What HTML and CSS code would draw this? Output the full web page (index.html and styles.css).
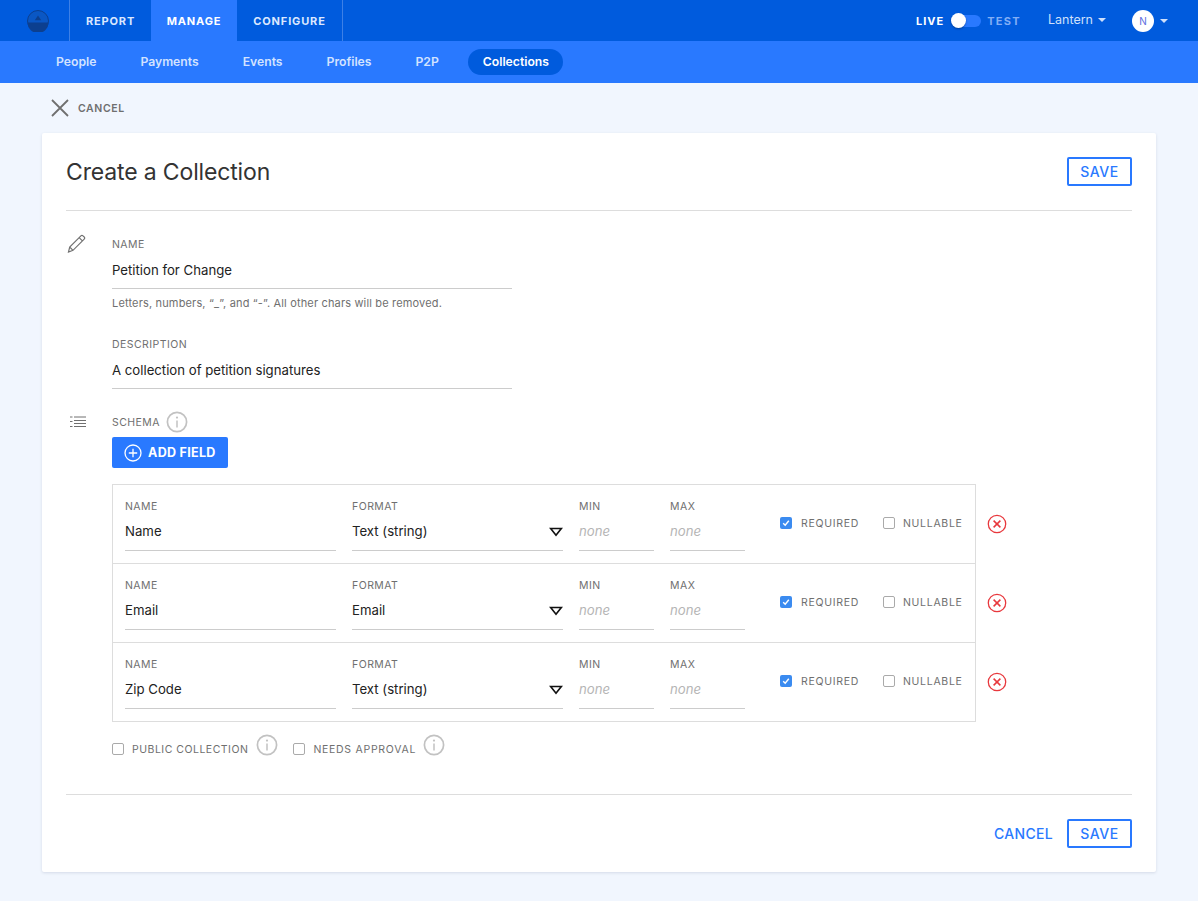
FILE: index.html
```html
<!DOCTYPE html>
<html lang="en">
<head>
<meta charset="utf-8">
<title>Create a Collection</title>
<link rel="stylesheet" href="styles.css">
</head>
<body>
<svg class="sprite" width="0" height="0" aria-hidden="true">
  <symbol id="i-info" viewBox="0 0 22 22">
    <circle cx="11" cy="11" r="9.6" fill="none" stroke="currentColor" stroke-width="1.7"/>
    <circle cx="11" cy="6.6" r="1.1" fill="currentColor"/>
    <path d="M11 9.5v7" fill="none" stroke="currentColor" stroke-width="1.5"/>
  </symbol>
  <symbol id="i-remove" viewBox="0 0 20 20">
    <circle cx="10" cy="10" r="8.7" fill="none" stroke="#e8383d" stroke-width="1.3"/>
    <path d="M6.6 6.6l6.8 6.8M13.4 6.6l-6.8 6.8" fill="none" stroke="#e8383d" stroke-width="1.5"/>
  </symbol>
  <symbol id="i-down" viewBox="0 0 14 10">
    <path d="M1.6 1.5h10.8L7 8.2z" fill="none" stroke="#111" stroke-width="1.7" stroke-linejoin="miter"/>
  </symbol>
  <symbol id="i-check" viewBox="0 0 12 12">
    <path d="M3.2 6.3l2 2 3.6-4.6" fill="none" stroke="#fff" stroke-width="1.4"/>
  </symbol>
</svg>

<header class="topbar">
  <div class="logo-cell">
    <svg class="logo" width="22" height="22" viewBox="0 0 22 22">
      <circle cx="11" cy="11" r="10.5" fill="#0a57c4" stroke="#0c3f8f" stroke-width="1"/>
      <path d="M0.5 12.500h21a10.500 10.500 0 0 1-21 0z" fill="#0c3f8f"/>
      <path d="M11 5.500l3.200 4.700H7.800z" fill="#0c3f8f"/>
    </svg>
  </div>
  <nav class="mainnav">
    <a class="mainnav-item mainnav-report">REPORT</a>
    <a class="mainnav-item mainnav-manage">MANAGE</a>
    <a class="mainnav-item mainnav-configure">CONFIGURE</a>
  </nav>
  <div class="topbar-right">
    <span class="mode mode-live">LIVE</span>
    <span class="toggle"><span class="toggle-knob"></span></span>
    <span class="mode mode-test">TEST</span>
    <span class="org">Lantern<span class="caret"></span></span>
    <span class="user"><span class="avatar">N</span><span class="caret"></span></span>
  </div>
</header>

<nav class="subnav">
  <a class="subnav-item">People</a>
  <a class="subnav-item">Payments</a>
  <a class="subnav-item">Events</a>
  <a class="subnav-item">Profiles</a>
  <a class="subnav-item">P2P</a>
  <a class="subnav-item subnav-active">Collections</a>
</nav>

<main class="page">
  <div class="back">
    <svg width="20" height="20" viewBox="0 0 20 20"><path d="M2 2l16 16M18 2L2 18" fill="none" stroke="#6f6f6f" stroke-width="1.8"/></svg>
    <span>CANCEL</span>
  </div>

  <section class="card">
    <div class="card-head">
      <h1>Create a Collection</h1>
      <button class="btn-outline">SAVE</button>
    </div>

    <div class="section section-details">
      <svg class="section-icon" width="20" height="20" viewBox="0 0 20 20">
        <path d="M1.500 18l1.200-5L13.900 1.800a1.500 1.500 0 0 1 2.100 0l1.200 1.200a1.500 1.500 0 0 1 0 2.100L6 16.300zM2.700 13l3.300 3.300M12.100 3.600l3.300 3.300" fill="none" stroke="#707070" stroke-width="1.150"/>
      </svg>
      <div class="section-body">
        <div class="field field-wide">
          <div class="label">NAME</div>
          <div class="value">Petition for Change</div>
        </div>
        <div class="hint">Letters, numbers, “_”, and “-”. All other chars will be removed.</div>
        <div class="field field-wide">
          <div class="label">DESCRIPTION</div>
          <div class="value">A collection of petition signatures</div>
        </div>
      </div>
    </div>

    <div class="section section-schema">
      <svg class="section-icon" width="16" height="12" viewBox="0 0 16 12">
        <path d="M0 1h2.500M0 5.500h2.500M0 10.500h2.500M4 1h12M4 4.500h12M4 7.500h12M4 10.500h12" fill="none" stroke="#707070" stroke-width="1"/>
      </svg>
      <div class="section-body">
        <div class="schema-head">
          <span class="label">SCHEMA</span>
          <svg class="info" width="22" height="22"><use href="#i-info"/></svg>
        </div>
        <button class="btn-add">
          <svg width="18" height="18" viewBox="0 0 18 18"><circle cx="9" cy="9" r="8" fill="none" stroke="#fff" stroke-width="1.300"/><path d="M9 4.800v8.400M4.800 9h8.400" fill="none" stroke="#fff" stroke-width="1.300"/></svg>
          ADD FIELD
        </button>

        <div class="schema-wrap">
          <div class="schema-table">
            <div class="row">
              <div class="field col-name"><div class="label">NAME</div><div class="value">Name</div></div>
              <div class="field col-format"><div class="label">FORMAT</div><div class="value value-select">Text (string)<svg width="14" height="10"><use href="#i-down"/></svg></div></div>
              <div class="field col-num"><div class="label">MIN</div><div class="value value-empty">none</div></div>
              <div class="field col-num"><div class="label">MAX</div><div class="value value-empty">none</div></div>
              <label class="check check-required"><span class="box box-on"><svg width="12" height="12"><use href="#i-check"/></svg></span>REQUIRED</label>
              <label class="check"><span class="box"></span>NULLABLE</label>
            </div>
            <div class="row">
              <div class="field col-name"><div class="label">NAME</div><div class="value">Email</div></div>
              <div class="field col-format"><div class="label">FORMAT</div><div class="value value-select">Email<svg width="14" height="10"><use href="#i-down"/></svg></div></div>
              <div class="field col-num"><div class="label">MIN</div><div class="value value-empty">none</div></div>
              <div class="field col-num"><div class="label">MAX</div><div class="value value-empty">none</div></div>
              <label class="check check-required"><span class="box box-on"><svg width="12" height="12"><use href="#i-check"/></svg></span>REQUIRED</label>
              <label class="check"><span class="box"></span>NULLABLE</label>
            </div>
            <div class="row">
              <div class="field col-name"><div class="label">NAME</div><div class="value">Zip Code</div></div>
              <div class="field col-format"><div class="label">FORMAT</div><div class="value value-select">Text (string)<svg width="14" height="10"><use href="#i-down"/></svg></div></div>
              <div class="field col-num"><div class="label">MIN</div><div class="value value-empty">none</div></div>
              <div class="field col-num"><div class="label">MAX</div><div class="value value-empty">none</div></div>
              <label class="check check-required"><span class="box box-on"><svg width="12" height="12"><use href="#i-check"/></svg></span>REQUIRED</label>
              <label class="check"><span class="box"></span>NULLABLE</label>
            </div>
          </div>
          <div class="remove-col">
            <svg width="20" height="20"><use href="#i-remove"/></svg>
            <svg width="20" height="20"><use href="#i-remove"/></svg>
            <svg width="20" height="20"><use href="#i-remove"/></svg>
          </div>
        </div>

        <div class="options">
          <label class="check"><span class="box"></span>PUBLIC COLLECTION</label>
          <svg class="info" width="22" height="22"><use href="#i-info"/></svg>
          <label class="check check-approval"><span class="box"></span>NEEDS APPROVAL</label>
          <svg class="info info-approval" width="22" height="22"><use href="#i-info"/></svg>
        </div>
      </div>
    </div>

    <div class="card-foot">
      <a class="link">CANCEL</a>
      <button class="btn-outline">SAVE</button>
    </div>
  </section>
</main>
</body>
</html>
```
FILE: styles.css
```css
* { box-sizing: border-box; }
html, body { margin: 0; }
body {
  height: 901px;
  overflow: hidden;
  background: #f1f6fe;
  font-family: Inter, "Noto Sans", sans-serif;
  font-size: 13px;
  color: #222;
}
.sprite { position: absolute; }

.topbar {
  display: flex;
  height: 41px;
  background: #005bdd;
  color: #fff;
}
.logo-cell {
  width: 70px;
  display: flex;
  align-items: center;
  padding-left: 27px;
  border-right: 1px solid #3d80e6;
}
.mainnav { display: flex; }
.mainnav-item {
  display: flex;
  align-items: center;
  justify-content: center;
  font-size: 11px;
  font-weight: 700;
  letter-spacing: 0.85px;
  color: #dbe8ff;
}
.mainnav-report { width: 81px; }
.mainnav-manage { width: 86px; background: #2979ff; color: #fff; }
.mainnav-configure { width: 106px; border-right: 1px solid #3d80e6; }

.topbar-right {
  margin-left: auto;
  display: flex;
  align-items: center;
  padding-right: 30px;
}
.mode { font-size: 11px; font-weight: 700; letter-spacing: 1.3px; }
.mode-live { letter-spacing: 1px; color: #fff; }
.mode-test { color: #82aef5; }
.toggle {
  display: flex;
  align-items: center;
  width: 30px;
  height: 12px;
  margin: 0 6px 0 7px;
  border-radius: 6px;
  background: #2979ff;
}
.toggle-knob {
  width: 15px;
  height: 15px;
  border-radius: 50%;
  background: #fff;
  box-shadow: 0 1px 2px rgba(0, 0, 0, 0.3);
}
.org {
  display: flex;
  align-items: center;
  gap: 5px;
  margin-left: 27px;
  padding-bottom: 2px;
  font-size: 12.5px;
  color: #cfe0fb;
}
.caret {
  width: 0;
  height: 0;
  border-left: 4px solid transparent;
  border-right: 4px solid transparent;
  border-top: 4px solid #cfe0fb;
}
.user { display: flex; align-items: center; gap: 6px; margin-left: 26px; }
.avatar {
  display: flex;
  align-items: center;
  justify-content: center;
  width: 22px;
  height: 22px;
  border-radius: 50%;
  background: #fff;
  color: #5b6de0;
  font-size: 10px;
}

.subnav {
  display: flex;
  align-items: center;
  gap: 14px;
  height: 42px;
  padding-left: 41px;
  background: #2979ff;
}
.subnav-item {
  padding: 0 15px;
  line-height: 26px;
  border-radius: 13px;
  font-size: 12.2px;
  font-weight: 600;
  color: #d3e3ff;
}
.subnav-active { padding-right: 14px; background: #005bdd; color: #fff; }

.page { padding: 0 42px; }
.back {
  display: flex;
  align-items: center;
  gap: 8px;
  height: 50px;
  padding-left: 8px;
  font-size: 10.500px;
  font-weight: 600;
  letter-spacing: 0.6px;
  color: #6f6f6f;
}
.card {
  height: 739px;
  padding: 0 24px;
  background: #fff;
  border-radius: 2px;
  box-shadow: 0 1px 3px rgba(40, 60, 100, 0.14);
}
.card-head {
  display: flex;
  align-items: center;
  justify-content: space-between;
  height: 78px;
  border-bottom: 1px solid #ddd;
}
h1 {
  margin: 0;
  font-size: 23px;
  font-weight: 400;
  letter-spacing: -0.15px;
  color: #333;
}
.btn-outline {
  width: 65px;
  height: 29px;
  padding: 0;
  border: 2px solid #2979ff;
  border-radius: 2px;
  background: #fff;
  font: 500 14px Inter, sans-serif;
  letter-spacing: 0.6px;
  color: #2979ff;
}

.section { display: flex; }
.section-icon { flex: none; margin-left: 1px; }
.section-details { padding-top: 23px; }
.section-details .section-icon { margin-right: 25px; }
.section-schema { padding-top: 21px; }
.section-schema .section-icon { margin: 6px 26px 0 4px; }
.section-body { flex: 1; }

.field { border-bottom: 1px solid #ccc; }
.field-wide { width: 400px; height: 55px; padding-top: 5px; }
.label {
  line-height: 12px;
  font-size: 10.500px;
  letter-spacing: 0.45px;
  color: #6f6f6f;
}
.value {
  margin-top: 11px;
  line-height: 17px;
  font-size: 13.200px;
  color: #222;
}
.hint {
  height: 45px;
  padding-top: 8px;
  font-size: 11px;
  letter-spacing: 0.16px;
  line-height: 13px;
  color: #6f6f6f;
}

.schema-head { display: flex; align-items: center; gap: 6px; height: 26px; }
.schema-head .info { margin-top: -2px; }
.btn-add {
  display: flex;
  align-items: center;
  gap: 6px;
  width: 116px;
  height: 31px;
  margin-top: 1px;
  padding: 0 0 0 12px;
  border: 0;
  border-radius: 2px;
  background: #2979ff;
  font: 700 12.500px Inter, sans-serif;
  letter-spacing: 0.3px;
  color: #fff;
}
.info { flex: none; color: #c2c2c2; }

.schema-wrap { display: flex; margin-top: 16px; }
.schema-table {
  width: 864px;
  border: 1px solid #ddd;
  border-bottom: 0;
}
.row {
  display: flex;
  height: 79px;
  padding: 16px 0 0 12px;
  border-bottom: 1px solid #ddd;
}
.row .field { height: 50px; margin-right: 16px; }
.row .value { margin-top: 10px; }
.col-name, .col-format { width: 211px; }
.col-num { width: 75px; }
.value-select { display: flex; align-items: center; justify-content: space-between; }
.value-empty { font-style: italic; color: #b5b5b5; }

.check {
  display: flex;
  align-items: center;
  gap: 8px;
  font-size: 10.500px;
  letter-spacing: 0.7px;
  color: #6f6f6f;
}
.row .check { height: 16px; margin-top: 14px; }
.row .check-required { width: 103px; margin-left: 19px; gap: 9px; }
.box {
  flex: none;
  width: 12px;
  height: 12px;
  border: 1px solid #aaa;
  border-radius: 2px;
  background: #fff;
}
.box-on { border: 0; background: #3b8bf0; }
.box-on svg { display: block; }

.remove-col {
  display: flex;
  flex-direction: column;
  gap: 59px;
  padding: 30px 0 0 11px;
}
.remove-col svg { display: block; }

.options {
  display: flex;
  align-items: center;
  height: 22px;
  margin-top: 16px;
}
.options .check { letter-spacing: 0.5px; }
.options .info { margin-left: 8px; margin-top: -8px; }
.options .check-approval { margin-left: 15px; letter-spacing: 0.72px; }
.options .info-approval { margin-left: 7px; }

.card-foot {
  display: flex;
  align-items: center;
  justify-content: flex-end;
  gap: 14px;
  height: 78px;
  margin-top: 34px;
  border-top: 1px solid #ddd;
}
.link {
  font-size: 14px;
  font-weight: 500;
  letter-spacing: 0.3px;
  color: #2979ff;
}
```
